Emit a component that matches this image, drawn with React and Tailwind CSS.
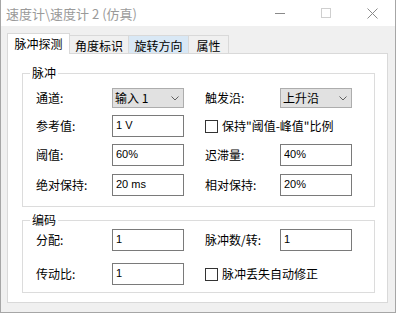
const cjk = "font-['Noto_Sans_CJK_SC','Liberation_Sans',sans-serif]";

function Field({ value }) {
  return (
    <input
      readOnly
      value={value}
      className="h-[22px] w-[72px] border border-[#7a7a7a] bg-white pl-[3px] pb-[2px] font-['Liberation_Sans',sans-serif] text-[11px] text-black outline-none"
    />
  );
}

function Combo({ value }) {
  return (
    <div className="flex h-[20px] w-[72px] items-center justify-between border border-[#adadad] bg-[#e1e1e1] pl-[2px] pr-[4px] text-[12px] leading-none text-black">
      <span>{value}</span>
      <svg width="8" height="5" viewBox="0 0 8 5">
        <path d="M0.5 0.5 L4 4 L7.5 0.5" fill="none" stroke="#606060" strokeWidth="1" />
      </svg>
    </div>
  );
}

function Check({ label }) {
  return (
    <div className="flex items-center gap-[4px] text-[12px] leading-none text-black">
      <div className="h-[13px] w-[13px] border border-[#333333] bg-white" />
      <span>{label}</span>
    </div>
  );
}

function Label({ text, w }) {
  return <div className={`${w} text-[12px] leading-none text-black`}>{text}</div>;
}

function Group({ title, className, children }) {
  return (
    <div className={`relative border border-[#dcdcdc] ${className}`}>
      <div className="absolute left-[7px] top-[-9px] bg-white px-[2px] text-[12px] leading-[16px] text-black">{title}</div>
      {children}
    </div>
  );
}

function Row({ className, children }) {
  return <div className={`flex h-[22px] items-center pl-[13px] ${className}`}>{children}</div>;
}

export default function App() {
  const tabs = ["角度标识", "旋转方向", "属性"];
  return (
    <div className={`flex h-[313px] w-[396px] flex-col border-x border-b border-[#a6a6a6] bg-[#f0f0f0] ${cjk}`}>
      <div className="flex h-[26px] items-center bg-white">
        <div className="flex-1 pl-[5px] text-[13px] leading-none text-[#9a9a9a]">速度计\速度计 2 (仿真)</div>
        <div className="flex h-full w-[46px] items-center justify-center">
          <div className="h-px w-[10px] bg-[#8a8a8a]" />
        </div>
        <div className="flex h-full w-[46px] items-center justify-center">
          <div className="h-[10px] w-[10px] border border-[#cfcfcf]" />
        </div>
        <div className="flex h-full w-[46px] items-center justify-center">
          <svg width="11" height="11" viewBox="0 0 11 11">
            <path d="M0.5 0.5 L10.5 10.5 M10.5 0.5 L0.5 10.5" stroke="#8a8a8a" strokeWidth="1" />
          </svg>
        </div>
      </div>

      <div className="flex flex-1 flex-col pl-[6px] pr-[7px] pt-[7px] pb-[9px]">
        <div className="flex h-[20px] items-start">
          <div className="relative z-10 flex h-[21px] w-[63px] items-center justify-center border-x border-t border-[#d9d9d9] bg-white pb-[1px] text-[12px] leading-none text-black">
            脉冲探测
          </div>
          <div className="mt-[2px] flex h-[18px] w-[59px] items-center justify-center border-r border-t border-[#d9d9d9] bg-[#f0f0f0] pt-[3px] text-[12px] leading-none text-black">
            {tabs[0]}
          </div>
          <div className="mt-[2px] flex h-[18px] w-[60px] items-center justify-center border-r border-t border-[#d9d9d9] bg-[#d9e8f5] pt-[3px] text-[12px] leading-none text-black">
            {tabs[1]}
          </div>
          <div className="mt-[2px] flex h-[18px] w-[40px] items-center justify-center border-r border-t border-[#d9d9d9] bg-[#f0f0f0] pt-[3px] text-[12px] leading-none text-black">
            {tabs[2]}
          </div>
        </div>

        <div className="flex h-[250px] flex-col border border-[#d9d9d9] bg-white pl-[14px] pr-[12px]">
          <Group title="脉冲" className="mt-[19px] h-[134px]">
            <Row className="mt-[13px]">
              <Label text="通道:" w="w-[76px]" />
              <Combo value="输入 1" />
              <Label text="触发沿:" w="ml-[21px] w-[75px]" />
              <Combo value="上升沿" />
            </Row>
            <Row className="mt-[6px]">
              <Label text="参考值:" w="w-[76px]" />
              <Field value="1 V" />
              <div className="ml-[21px]">
                <Check label={'保持"阈值-峰值"比例'} />
              </div>
            </Row>
            <Row className="mt-[7px]">
              <Label text="阈值:" w="w-[76px]" />
              <Field value="60%" />
              <Label text="迟滞量:" w="ml-[21px] w-[75px]" />
              <Field value="40%" />
            </Row>
            <Row className="mt-[8px]">
              <Label text="绝对保持:" w="w-[76px]" />
              <Field value="20 ms" />
              <Label text="相对保持:" w="ml-[21px] w-[75px]" />
              <Field value="20%" />
            </Row>
          </Group>

          <Group title="编码" className="mt-[13px] h-[73px]">
            <Row className="mt-[8px]">
              <Label text="分配:" w="w-[76px]" />
              <Field value="1" />
              <Label text="脉冲数/转:" w="ml-[21px] w-[75px]" />
              <Field value="1" />
            </Row>
            <Row className="mt-[12px]">
              <Label text="传动比:" w="w-[76px]" />
              <Field value="1" />
              <div className="ml-[21px]">
                <Check label="脉冲丢失自动修正" />
              </div>
            </Row>
          </Group>
        </div>
      </div>
    </div>
  );
}
